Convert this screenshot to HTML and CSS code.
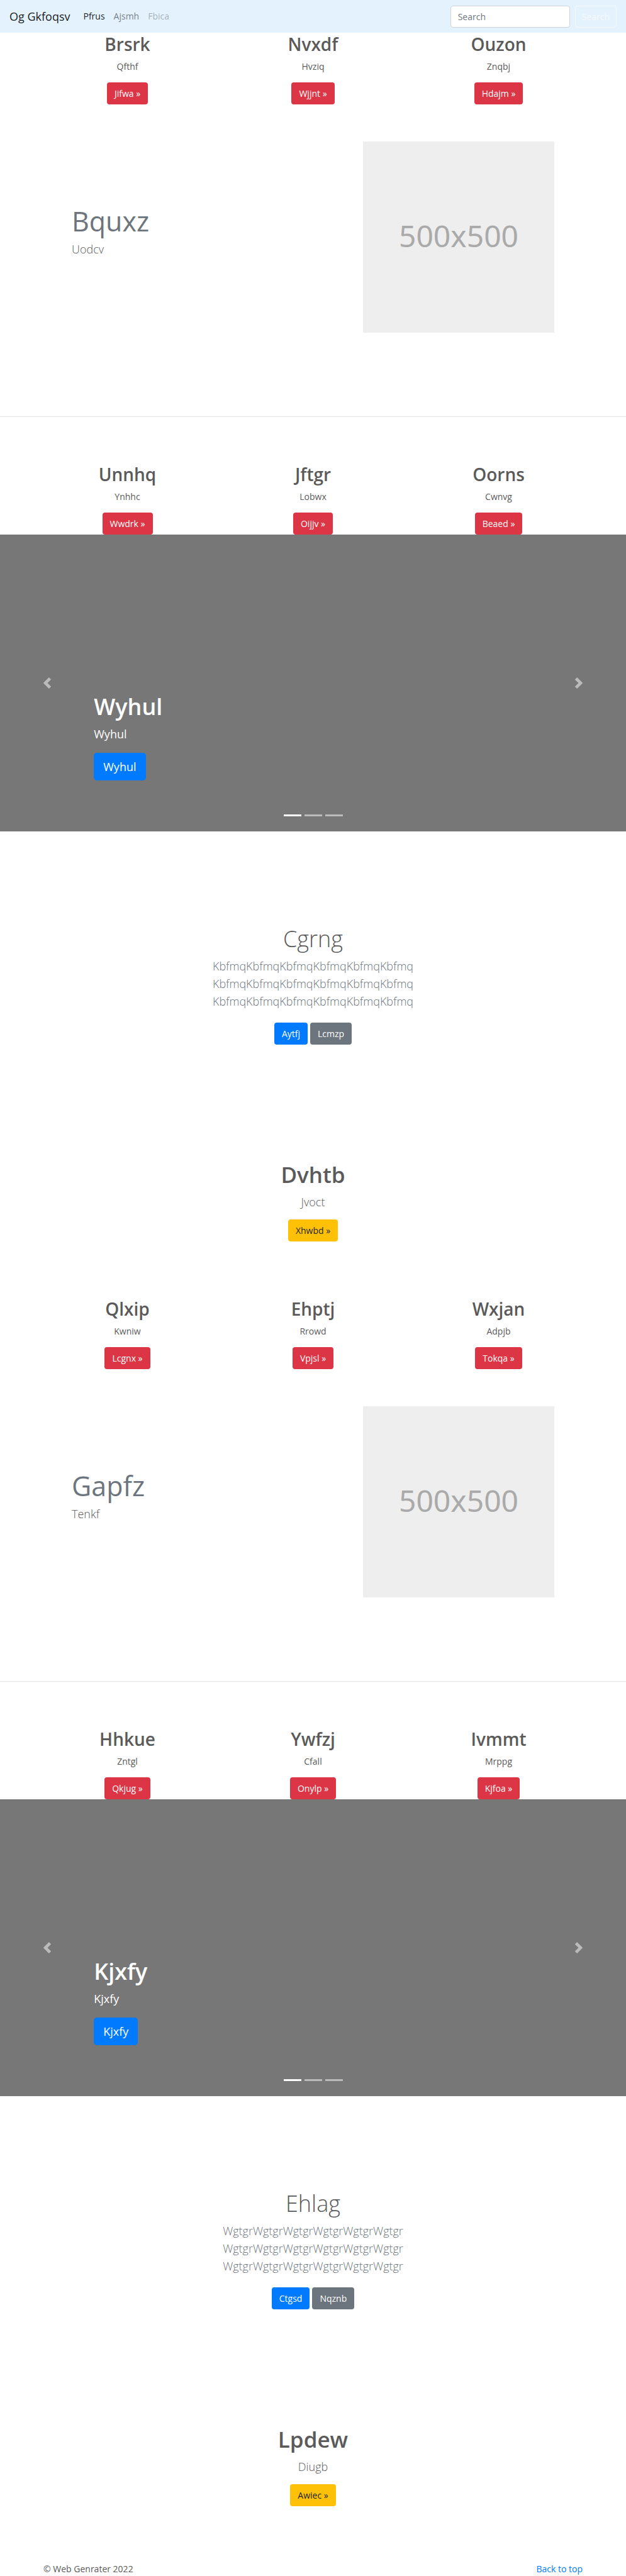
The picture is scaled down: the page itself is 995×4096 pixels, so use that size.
FILE: index.html
```html
<!DOCTYPE html>
<html lang="en">
<head>
<meta charset="utf-8">
<meta name="viewport" content="width=device-width, initial-scale=1">
<title>Og Gkfoqsv</title>
<link rel="stylesheet" href="styles.css">
</head>
<body>
<header class="navbar" id="top">
  <a class="brand" href="#">Og Gkfoqsv</a>
  <nav class="nav">
    <a class="nav-link active" href="#">Pfrus</a>
    <a class="nav-link" href="#">Ajsmh</a>
    <a class="nav-link disabled" href="#">Fbica</a>
  </nav>
  <form class="search">
    <input class="search-input" type="search" placeholder="Search" aria-label="Search">
    <button class="btn btn-outline" type="button">Search</button>
  </form>
</header>
<main>
  <div class="block">
    <section class="columns">
      <div class="column"><h2>Brsrk</h2><p>Qfthf</p><a class="btn btn-danger" href="#">Jifwa »</a></div>
      <div class="column"><h2>Nvxdf</h2><p>Hvziq</p><a class="btn btn-danger" href="#">Wjjnt »</a></div>
      <div class="column"><h2>Ouzon</h2><p>Znqbj</p><a class="btn btn-danger" href="#">Hdajm »</a></div>
    </section>
    <section class="featurette">
      <div class="featurette-text"><h2>Bquxz</h2><p class="lead">Uodcv</p></div>
      <div class="placeholder">500x500</div>
    </section>
    <hr class="divider">
    <section class="columns">
      <div class="column"><h2>Unnhq</h2><p>Ynhhc</p><a class="btn btn-danger" href="#">Wwdrk »</a></div>
      <div class="column"><h2>Jftgr</h2><p>Lobwx</p><a class="btn btn-danger" href="#">Oijjv »</a></div>
      <div class="column"><h2>Oorns</h2><p>Cwnvg</p><a class="btn btn-danger" href="#">Beaed »</a></div>
    </section>
    <section class="carousel">
      <button class="control" type="button" aria-label="Previous"><svg viewBox="0 0 8 8"><path d="M5.25 0l-4 4 4 4 1.5-1.5L4.25 4l2.5-2.5L5.25 0z"/></svg></button>
      <div class="slide">
        <div class="caption"><h1>Wyhul</h1><p>Wyhul</p><a class="btn btn-primary btn-large" href="#">Wyhul</a></div>
        <div class="indicators"><span class="on"></span><span></span><span></span></div>
      </div>
      <button class="control" type="button" aria-label="Next"><svg viewBox="0 0 8 8"><path d="M2.75 0l-1.5 1.5L3.75 4l-2.5 2.5L2.75 8l4-4-4-4z"/></svg></button>
    </section>
    <section class="intro">
      <h1>Cgrng</h1>
      <p class="lead">KbfmqKbfmqKbfmqKbfmqKbfmqKbfmq<br>KbfmqKbfmqKbfmqKbfmqKbfmqKbfmq<br>KbfmqKbfmqKbfmqKbfmqKbfmqKbfmq</p>
      <div class="actions"><a class="btn btn-primary" href="#">Aytfj</a><a class="btn btn-secondary" href="#">Lcmzp</a></div>
    </section>
    <section class="promo">
      <h1>Dvhtb</h1>
      <p class="lead">Jvoct</p>
      <a class="btn btn-warning" href="#">Xhwbd »</a>
    </section>
  </div>
  <div class="block">
    <section class="columns">
      <div class="column"><h2>Qlxip</h2><p>Kwniw</p><a class="btn btn-danger" href="#">Lcgnx »</a></div>
      <div class="column"><h2>Ehptj</h2><p>Rrowd</p><a class="btn btn-danger" href="#">Vpjsl »</a></div>
      <div class="column"><h2>Wxjan</h2><p>Adpjb</p><a class="btn btn-danger" href="#">Tokqa »</a></div>
    </section>
    <section class="featurette">
      <div class="featurette-text"><h2>Gapfz</h2><p class="lead">Tenkf</p></div>
      <div class="placeholder">500x500</div>
    </section>
    <hr class="divider">
    <section class="columns">
      <div class="column"><h2>Hhkue</h2><p>Zntgl</p><a class="btn btn-danger" href="#">Qkjug »</a></div>
      <div class="column"><h2>Ywfzj</h2><p>Cfall</p><a class="btn btn-danger" href="#">Onylp »</a></div>
      <div class="column"><h2>Ivmmt</h2><p>Mrppg</p><a class="btn btn-danger" href="#">Kjfoa »</a></div>
    </section>
    <section class="carousel">
      <button class="control" type="button" aria-label="Previous"><svg viewBox="0 0 8 8"><path d="M5.25 0l-4 4 4 4 1.5-1.5L4.25 4l2.5-2.5L5.25 0z"/></svg></button>
      <div class="slide">
        <div class="caption"><h1>Kjxfy</h1><p>Kjxfy</p><a class="btn btn-primary btn-large" href="#">Kjxfy</a></div>
        <div class="indicators"><span class="on"></span><span></span><span></span></div>
      </div>
      <button class="control" type="button" aria-label="Next"><svg viewBox="0 0 8 8"><path d="M2.75 0l-1.5 1.5L3.75 4l-2.5 2.5L2.75 8l4-4-4-4z"/></svg></button>
    </section>
    <section class="intro">
      <h1>Ehlag</h1>
      <p class="lead">WgtgrWgtgrWgtgrWgtgrWgtgrWgtgr<br>WgtgrWgtgrWgtgrWgtgrWgtgrWgtgr<br>WgtgrWgtgrWgtgrWgtgrWgtgrWgtgr</p>
      <div class="actions"><a class="btn btn-primary" href="#">Ctgsd</a><a class="btn btn-secondary" href="#">Nqznb</a></div>
    </section>
    <section class="promo">
      <h1>Lpdew</h1>
      <p class="lead">Diugb</p>
      <a class="btn btn-warning" href="#">Awiec »</a>
    </section>
  </div>
</main>
<footer class="footer">
  <span>© Web Genrater 2022</span>
  <a href="#top">Back to top</a>
</footer>
</body>
</html>
```
FILE: styles.css
```css
* { box-sizing: border-box; }

body {
  margin: 0;
  background: #fff;
  color: #5a5a5a;
  font: 400 14px/22px "Open Sans", "Noto Sans", sans-serif;
}

h1, h2, p { margin: 0; }
a { color: #007bff; text-decoration: none; }

.navbar {
  display: flex;
  align-items: center;
  height: 52px;
  padding: 0 15px;
  background: #e3f2fd;
}
.brand { margin-right: 14px; font-size: 18px; line-height: 28px; color: rgba(0, 0, 0, .9); }
.nav { display: flex; flex: 1; }
.nav-link { padding: 7px; color: rgba(0, 0, 0, .5); }
.nav-link.active { color: rgba(0, 0, 0, .9); }
.nav-link.disabled { color: rgba(0, 0, 0, .3); }
.search { display: flex; gap: 8px; }
.search-input {
  width: 190px;
  height: 35px;
  padding: 0 11px;
  border: 1px solid #ced4da;
  border-radius: 4px;
  background: #fff;
  color: #495057;
  font: inherit;
}
.search-input::placeholder { color: #6c757d; opacity: 1; }

.btn {
  display: inline-block;
  height: 35px;
  padding: 5px 11px;
  border: 1px solid transparent;
  border-radius: 4px;
  font: inherit;
  line-height: 23px;
  color: #fff;
  vertical-align: top;
}
.btn-danger { background: #dc3545; }
.btn-primary { background: #007bff; }
.btn-secondary { background: #6c757d; }
.btn-warning { background: #ffc107; color: #212529; }
.btn-outline { padding: 5px 10px; background: transparent; border-color: #f8f9fa; color: #f8f9fa; }
.btn-large { height: 44px; padding: 7px 14px; border-radius: 5px; font-size: 18px; line-height: 28px; }

.lead { font-size: 18px; font-weight: 300; line-height: 28px; }

.block { padding-bottom: 89px; }

.columns {
  display: grid;
  grid-template-columns: repeat(3, 1fr);
  margin: 0 55px;
  text-align: center;
}
.column h2 { margin-bottom: 7px; font-size: 28px; font-weight: 600; line-height: 36px; }
.column p { margin-bottom: 14px; }

.featurette {
  display: flex;
  justify-content: space-between;
  margin: 59px 114px 133px;
}
.featurette-text { padding-top: 102px; }
.featurette-text h2 { margin-bottom: 5px; font-size: 43px; font-weight: 400; line-height: 50px; color: #6c757d; }
.placeholder {
  display: flex;
  align-items: center;
  justify-content: center;
  width: 40%;
  max-width: 304px;
  aspect-ratio: 1;
  padding-bottom: 5px;
  background: #eee;
  color: #aaa;
  font-family: "Noto Sans", sans-serif;
  font-size: 48px;
  line-height: 60px;
}
.divider { margin: 0 0 73px; border: 0; border-top: 1px solid #e5e5e5; }

.carousel { display: flex; height: 472px; background: #777; color: #fff; }
.control {
  display: flex;
  align-items: center;
  justify-content: center;
  width: 15%;
  padding: 0;
  border: 0;
  background: none;
  opacity: .5;
}
.control svg { width: 18px; height: 18px; fill: #fff; }
.slide { display: flex; flex: 1; flex-direction: column; justify-content: flex-end; }
.caption h1 { margin-bottom: 7px; font-size: 36px; font-weight: 600; line-height: 44px; }
.caption p { margin-bottom: 16px; font-size: 18px; line-height: 28px; }
.indicators { display: flex; justify-content: center; gap: 5px; padding: 54px 0 24px; }
.indicators span { width: 28px; height: 3px; background: rgba(255, 255, 255, .5); }
.indicators .on { background: #fff; }

.intro { margin-top: 149px; text-align: center; }
.intro h1 { margin-bottom: 7px; font-size: 36px; font-weight: 300; line-height: 44px; }
.intro .lead { margin-bottom: 20px; color: #6c757d; }
.actions { display: flex; justify-content: center; gap: 4px; }

.promo { margin-top: 185px; text-align: center; }
.promo h1 { margin-bottom: 7px; font-size: 35px; font-weight: 600; line-height: 44px; }
.promo .lead { margin-bottom: 14px; }

.footer { display: flex; justify-content: space-between; padding: 0 69px; }
```
